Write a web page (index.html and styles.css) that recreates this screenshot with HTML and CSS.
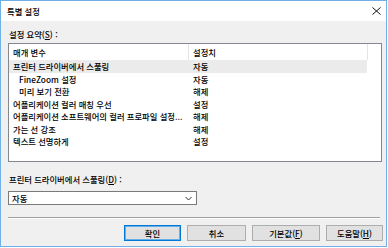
FILE: index.html
```html
<!DOCTYPE html>
<html lang="ko">
<head>
<meta charset="utf-8">
<title>특별 설정</title>
<link rel="stylesheet" href="styles.css">
</head>
<body>
<div class="window">
  <div class="titlebar">
    <span class="title">특별 설정</span>
    <svg class="close" width="9" height="8" viewBox="0 0 9 8"><path d="M0.5 0.5 L8.5 7.5 M8.5 0.5 L0.5 7.5" stroke="#111" stroke-width="1" fill="none"/></svg>
  </div>
  <div class="content">
    <div class="label">설정 요약(<u>S</u>) :</div>
    <div class="listbox">
      <div class="row head">
        <div class="c1">매개 변수</div>
        <div class="c2">설정치</div>
        <div class="c3"></div>
      </div>
      <div class="row sel"><div class="c1">프린터 드라이버에서 스풀링</div><div class="c2">자동</div></div>
      <div class="row"><div class="c1 ind">FineZoom 설정</div><div class="c2">자동</div></div>
      <div class="row"><div class="c1 ind">미리 보기 전환</div><div class="c2">해제</div></div>
      <div class="row"><div class="c1">어플리케이션 컬러 매칭 우선</div><div class="c2">설정</div></div>
      <div class="row"><div class="c1">어플리케이션 소프트웨어의 컬러 프로파일 설정...</div><div class="c2">해제</div></div>
      <div class="row"><div class="c1">가는 선 강조</div><div class="c2">해제</div></div>
      <div class="row"><div class="c1">텍스트 선명하게</div><div class="c2">설정</div></div>
    </div>
    <div class="label label2">프린터 드라이버에서 스풀링(<u>D</u>) :</div>
    <div class="combo">
      <span>자동</span>
      <svg width="7" height="5" viewBox="0 0 7 5"><path d="M0.5 1 L3.5 4 L6.5 1" stroke="#333" stroke-width="1" fill="none"/></svg>
    </div>
    <div class="sep"></div>
    <div class="buttons">
      <div class="btn default">확인</div>
      <div class="btn b2">취소</div>
      <div class="btn b3">기본값(<u>F</u>)</div>
      <div class="btn">도움말(<u>H</u>)</div>
    </div>
  </div>
</div>
</body>
</html>
```
FILE: styles.css
```css
html, body {
  margin: 0;
  padding: 0;
  background: #ffffff;
}
body {
  font-family: "Noto Sans CJK KR", "Noto Sans", sans-serif;
  font-size: 8.3px;
  font-weight: 500;
  line-height: 12px;
  color: #000;
}
.window {
  width: 385px;
  height: 245px;
  border: 1px solid #6fb0e6;
  background: #f0f0f0;
  display: flex;
  flex-direction: column;
}
.titlebar {
  height: 20px;
  background: #ffffff;
  display: flex;
  align-items: center;
  justify-content: space-between;
  padding: 0 5px 0 6px;
  flex: none;
}
.title {
  color: #000;
}
.close {
  display: block;
  margin-top: -1px;
}
.content {
  padding: 7px 0 0 7px;
  display: flex;
  flex-direction: column;
}
.label {
  padding-left: 1px;
  height: 12px;
}
.label u, .btn u {
  text-underline-offset: 1px;
}
.listbox {
  margin-top: 3px;
  width: 372px;
  height: 117px;
  border: 1px solid #828790;
  background: #ffffff;
  display: flex;
  flex-direction: column;
}
.row {
  display: flex;
  height: 12.5px;
  align-items: center;
  width: 358px;
}
.row.head {
  height: 16px;
  width: 372px;
}
.row.sel {
  background: #ebebeb;
}
.c1 {
  width: 175px;
  padding-left: 4px;
  white-space: nowrap;
  overflow: hidden;
  flex: none;
}
.c1.ind {
  padding-left: 10px;
  width: 169px;
}
.c2 {
  width: 174px;
  padding-left: 5px;
  flex: none;
}
.head .c1, .head .c2 {
  height: 16px;
  line-height: 16px;
}
.head .c2 {
  border-left: 1px solid #e5e5e5;
  border-right: 1px solid #e5e5e5;
  padding-left: 4px;
}
.head .c3 {
  flex: 1;
}
.label2 {
  margin-top: 11px;
}
.combo {
  margin-top: 6px;
  width: 180px;
  height: 12px;
  border: 1px solid #7a7a7a;
  background: #ffffff;
  display: flex;
  align-items: center;
  justify-content: space-between;
  padding: 0 4px 0 3px;
}
.combo svg {
  display: block;
}
.sep {
  margin-top: 12px;
  width: 372px;
  height: 0;
  border-top: 1px solid #a0a0a0;
  border-bottom: 1px solid #ffffff;
}
.buttons {
  margin-top: 6px;
  display: flex;
  padding-left: 116px;
  gap: 6px;
}
.btn {
  width: 55px;
  height: 14px;
  border: 1px solid #adadad;
  background: #e1e1e1;
  display: flex;
  align-items: center;
  justify-content: center;
}
.btn.default {
  border-color: #0078d7;
  box-shadow: inset 0 0 0 1px #66aee8;
}
.btn.b2 {
  width: 57px;
}
.btn.b3 {
  width: 66px;
}
```
